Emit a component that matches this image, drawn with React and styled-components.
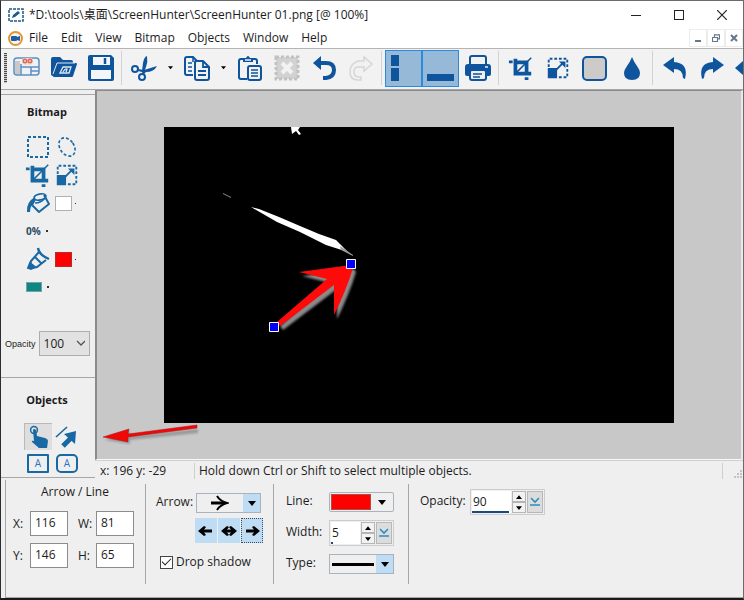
import React from "react"
import styled, { createGlobalStyle } from "styled-components"

const blue = "#0f559d"
const sideBlue = "#1868a4"
const face = "#efefef"
const lineGray = "#a6a6a6"
const activeBlue = "#bfdcf5"

const GlobalStyle = createGlobalStyle`
  * {
    box-sizing: border-box;
  }
  body {
    margin: 0;
    background: #16181c;
    color: #1c1c1c;
    font-family: "Open Sans", "Noto Sans CJK SC", sans-serif;
    font-size: 12px;
    line-height: 16px;
  }
  button, input, select {
    font: inherit;
    color: inherit;
    margin: 0;
    padding: 0;
  }
  svg {
    display: block;
    flex: none;
  }
`

const Window = styled.div`
  display: flex;
  flex-direction: column;
  height: 100vh;
  min-height: 560px;
  overflow: hidden;
  border: 1px solid #6b6b6b;
  border-left-color: #2a2d33;
  border-bottom: 2px solid #1b1b1d;
  background: ${face};
`

const TitleBar = styled.header`
  display: flex;
  align-items: center;
  height: 27px;
  flex: none;
  padding-left: 7px;
  background: white;
`

const TitleText = styled.h1`
  flex: 1;
  margin: 0;
  padding-left: 5px;
  font-size: 12px;
  font-weight: 400;
  white-space: nowrap;
`

const CaptionButton = styled.button`
  display: flex;
  align-items: center;
  justify-content: center;
  width: 43px;
  height: 26px;
  border: 0;
  background: none;
`

const MenuBar = styled.nav`
  display: flex;
  align-items: center;
  height: 20px;
  flex: none;
  padding-left: 7px;
  background: white;
`

const MenuItem = styled.button`
  padding: 0 7px 0 6px;
  border: 0;
  background: none;
`

const MenuList = styled.div`
  display: flex;
  flex: 1;
`

const ChildButton = styled.button`
  display: flex;
  align-items: center;
  justify-content: center;
  width: 18px;
  height: 18px;
  border: 1px solid #ececec;
  background: white;
`

const ToolBar = styled.div`
  display: flex;
  align-items: center;
  height: 42px;
  flex: none;
  overflow: hidden;
  padding-bottom: 2px;
  border-top: 1px solid #b4b4b4;
  border-bottom: 1px solid ${lineGray};
  background: #f2f2f2;
`

const Grip = styled.div`
  width: 3px;
  height: 30px;
  flex: none;
  margin: 0 1px 0 3px;
  background: repeating-linear-gradient(#4a4a4a 0 1px, #c8c8c8 1px 2px);
`

const ToolButton = styled.button`
  display: flex;
  align-items: center;
  justify-content: center;
  flex: none;
  width: 37px;
  height: 37px;
  border: 1px solid ${(props) => (props.$on ? "#2b8ade" : "transparent")};
  background: ${(props) => (props.$on ? "#97b9d8" : "none")};
`

const DropButton = styled.button`
  display: flex;
  align-items: center;
  justify-content: center;
  flex: none;
  width: 16px;
  height: 37px;
  border: 0;
  background: none;
`

const Separator = styled.div`
  flex: none;
  width: 1px;
  height: 34px;
  margin: 0 3px 0 2px;
  background: #d2d2d2;
`

const Work = styled.div`
  display: flex;
  flex: 1;
  min-height: 0;
`

const Side = styled.aside`
  display: flex;
  flex-direction: column;
  flex: none;
  width: 94px;
  margin-bottom: 2px;
  padding-top: 4px;
  border-bottom: 1px solid ${lineGray};
`

const SideSection = styled.section`
  padding-top: ${(props) => props.$top}px;
  border-top: 1px solid ${lineGray};
  flex: ${(props) => (props.$grow ? 1 : "none")};
`

const SideTitle = styled.h2`
  margin: 0 0 ${(props) => props.$gap}px;
  padding-right: 2px;
  font-size: 11px;
  line-height: 16px;
  font-weight: 700;
  text-align: center;
`

const ToolGrid = styled.div`
  display: grid;
  grid-template-columns: 28px 28px;
  grid-auto-rows: ${(props) => props.$row || 28}px;
  column-gap: 1px;
  padding-left: 23px;
`

const SideButton = styled.button`
  display: flex;
  align-items: center;
  justify-content: center;
  border: 0;
  color: #2c4a66;
  background: ${(props) => (props.$pressed ? "#dedede" : "none")};
  box-shadow: ${(props) => (props.$pressed ? "inset 1px 1px #b9b9b9" : "none")};
`

const WideButton = styled.button`
  grid-column: 1 / 3;
  display: flex;
  align-items: center;
  gap: 5px;
  padding-left: 2px;
  border: 0;
  background: none;
  color: #2c4a66;
  font-size: 10px;
  font-weight: 700;
`

const Swatch = styled.span`
  width: ${(props) => props.$w || 17}px;
  height: ${(props) => props.$h || 15}px;
  border: 1px solid ${(props) => props.$edge || "#b0b0b0"};
  background: ${(props) => props.$fill};
`

const Dot = styled.span`
  width: ${(props) => props.$size}px;
  height: ${(props) => props.$size}px;
  background: #333;
`

const SwatchButton = styled(SideButton)`
  justify-content: flex-start;
  gap: 3px;
  padding-left: 2px;
`

const OpacityRow = styled.div`
  display: flex;
  align-items: center;
  gap: 3px;
  margin-top: 30px;
  padding-left: 4px;
`

const SmallLabel = styled.label`
  font-family: "Liberation Sans", sans-serif;
  font-size: 9px;
  line-height: 12px;
`

const SelectWrap = styled.span`
  display: grid;
  align-items: center;
  width: 51px;
  height: 25px;
  border: 1px solid #adadad;
  background: #e2e2e2;

  select,
  svg {
    grid-area: 1 / 1;
  }
  svg {
    justify-self: end;
    margin-right: 4px;
    pointer-events: none;
  }
`

const PlainSelect = styled.select`
  appearance: none;
  width: 100%;
  padding-left: 4px;
  border: 0;
  background: none;
`

const Stage = styled.div`
  display: flex;
  flex-direction: column;
  flex: 1;
  min-width: 0;
`

const CanvasArea = styled.main`
  position: relative;
  display: flex;
  align-items: center;
  justify-content: center;
  flex: 1;
  min-height: 0;
  border: solid #8b8b8b;
  border-width: 1px 2px 1px 2px;
  border-right-color: #e9e9e9;
  border-bottom-color: #f8f8f8;
  background: #c8c8c8;
`

const Picture = styled.div`
  width: 510px;
  height: 296px;
  flex: none;
  background: black;
`

const Pointer = styled.svg`
  position: absolute;
  left: 0;
  bottom: 14px;
`

const StatusBar = styled.footer`
  display: flex;
  align-items: center;
  height: 20px;
  flex: none;
  padding-left: 5px;
  border-top: 1px solid #d0d0d0;
  white-space: nowrap;
`

const StatusCell = styled.span`
  padding-right: 10px;
  width: ${(props) => (props.$grow ? "auto" : "95px")};
  flex: ${(props) => (props.$grow ? 1 : "none")};
  border-right: 1px solid #cfcfcf;
  padding-left: ${(props) => (props.$grow ? 4 : 0)}px;
`

const Properties = styled.div`
  display: flex;
  flex: none;
  height: 118px;
  margin-left: 4px;
  padding-top: 4px;
  border-left: 1px solid ${lineGray};
  border-bottom: 1px solid ${lineGray};
`

const Group = styled.section`
  display: flex;
  flex-direction: column;
  gap: ${(props) => props.$gap || 0}px;
  width: ${(props) => props.$width}px;
  height: 100px;
  padding: ${(props) => props.$pad};
  border-right: ${(props) => (props.$last ? 0 : 1)}px solid ${lineGray};
  white-space: nowrap;
`

const GroupTitle = styled.h2`
  margin: 0;
  padding-right: 8px;
  font-size: 12px;
  font-weight: 400;
  text-align: center;
`

const FieldGrid = styled.div`
  display: grid;
  grid-template-columns: 17px 38px 28px 38px;
  row-gap: 7px;
  align-items: center;
  margin-top: 11px;

  label:nth-of-type(even) {
    padding-left: 10px;
  }
`

const NumberBox = styled.input`
  width: 38px;
  height: 25px;
  padding: 0 0 3px 4px;
  border: 1px solid #8c8c8c;
  background: white;
`

const Field = styled.div`
  display: flex;
  align-items: center;
  height: ${(props) => props.$h || 20}px;

  > label,
  > span:first-child {
    width: ${(props) => props.$label}px;
    padding-bottom: 2px;
  }
`

const Combo = styled.button`
  display: flex;
  align-items: stretch;
  justify-content: space-between;
  width: 65px;
  height: 20px;
  border: 1px solid #a9b3bd;
  border-radius: ${(props) => (props.$round ? 2 : 0)}px;
  background: ${face};
`

const ComboFace = styled.span`
  display: flex;
  flex: 1;
  align-items: center;
  justify-content: center;
`

const ComboArrow = styled.span`
  display: flex;
  align-items: center;
  justify-content: center;
  width: ${(props) => (props.$lit ? 17 : 22)}px;
  background: ${(props) => (props.$lit ? activeBlue : "none")};
`

const ArrowStyles = styled.div`
  display: flex;
  gap: 1px;
  margin-left: 39px;
`

const StyleButton = styled.button`
  display: flex;
  align-items: center;
  justify-content: center;
  width: 22px;
  height: 25px;
  border: 1px ${(props) => (props.$on ? "dotted #33506b" : `solid ${activeBlue}`)};
  background: ${activeBlue};
`

const CheckLabel = styled.label`
  display: flex;
  align-items: center;
  gap: 3px;
  margin: 6px 0 0 4px;
`

const CheckBox = styled.input`
  appearance: none;
  display: grid;
  place-items: center;
  width: 13px;
  height: 13px;
  border: 1px solid #444;
  background: white;

  &:checked::after {
    content: "";
    width: 8px;
    height: 4px;
    margin-bottom: 3px;
    border: solid #222;
    border-width: 0 0 1px 1px;
    transform: rotate(-45deg);
  }
`

const SpinBox = styled.div`
  display: flex;
  gap: 1px;
  width: ${(props) => props.$width}px;
  height: 26px;
  padding: 1px;
  border: 1px solid #cdcdcd;
`

const SpinValue = styled.div`
  display: flex;
  flex-direction: column;
  justify-content: space-between;
  align-items: flex-start;
  flex: 1;
  min-width: 0;
  background: white;
`

const SpinInput = styled.input`
  width: 100%;
  height: 20px;
  padding-left: 1px;
  border: 0;
  background: none;
`

const SpinLevel = styled.div`
  height: 2px;
  background: #174a80;
`

const SpinButtons = styled.div`
  display: grid;
  grid-template-rows: 1fr 1fr;
  width: 14px;
`

const SpinButton = styled.button`
  display: flex;
  align-items: center;
  justify-content: center;
  border: 1px solid #b5b5b5;
  background: #f2f2f2;
`

const SliderButton = styled.button`
  display: flex;
  align-items: center;
  justify-content: center;
  width: 16px;
  border: 1px solid #b8b8b8;
  background: #dcdcdc;
`

const Triangle = ({ size = 8, up = false }) => (
  <svg width={size} height={size / 2 + 1} viewBox="0 0 8 5" aria-hidden="true">
    <path d={up ? "M0 5h8L4 0z" : "M0 0h8L4 5z"} fill="#000" />
  </svg>
)

const Icon = ({ size = 28, box = 28, color = blue, children }) => (
  <svg
    width={size}
    height={size}
    viewBox={`0 0 ${box} ${box}`}
    fill="none"
    stroke={color}
    strokeWidth="2"
    aria-hidden="true">
    {children}
  </svg>
)

const CaptureIcon = () => (
  <Icon>
    <rect x="1" y="4" width="25" height="17" rx="3" fill="#eef2f6" stroke="#5d8fc2" strokeWidth="1.5" />
    <path d="M2 7h5v13H2z" fill="#c8c8c8" stroke="none" />
    <path d="M8 10v11M8 13h18M18 13v8M18 17h8" stroke="#5d8fc2" strokeWidth="1.5" />
    <rect x="9" y="4" width="11" height="7" rx="3" fill="#f3dcd6" stroke="none" />
    <circle cx="12" cy="7" r="1.7" stroke="#dc6a58" strokeWidth="1.6" />
    <circle cx="17" cy="7" r="1.7" stroke="#dc6a58" strokeWidth="1.6" />
  </Icon>
)

const FolderIcon = () => (
  <Icon>
    <path d="M1 20V5q0-2 2-2h7l3 3h8q2 0 2 2v2H8L4 22q-3 0-3-2z" fill={blue} stroke="none" />
    <path d="M8 10h18l-4 12H4z" fill={blue} stroke={blue} strokeLinejoin="round" />
    <path d="M3 20l4-11h18" stroke="#dfe8f0" strokeWidth="1" />
    <path d="M10 19l3-6h8l-2 6zM13 18q2-4 4-3l-1 3" stroke="#dce8f4" strokeWidth="1.3" />
  </Icon>
)

const SaveIcon = () => (
  <Icon>
    <path d="M3 1h21l3 3v21q0 2-2 2H3q-2 0-2-2V3q0-2 2-2z" fill={blue} stroke="none" />
    <path d="M6 3h17v8H6zM4 16h20v9H4z" fill="#f4f6f8" stroke="none" />
    <path d="M18 4v6" strokeWidth="2.5" />
  </Icon>
)

const CutIcon = () => (
  <Icon>
    <circle cx="5" cy="15" r="3" />
    <circle cx="12" cy="23" r="3" />
    <path d="M8 15l6 1 13-4q-3 6-11 6l-3 3-1-3-4-1zM12 17L13 9q1-6 4-7 1 6-1 11l-2 5z" fill={blue} stroke="none" />
  </Icon>
)

const CopyIcon = () => (
  <Icon>
    <path d="M10 21H4q-2 0-2-2V5q0-2 2-2h6l4 4" />
    <path d="M10 3v5M5 9h4M5 13h4M5 17h4" strokeWidth="1.5" />
    <path d="M12 8q0-1 2-1h6l6 6v11q0 2-2 2H14q-2 0-2-2z" />
    <path d="M20 7v6h6M15 17h8M15 21h8" strokeWidth="1.8" />
  </Icon>
)

const PasteIcon = () => (
  <Icon>
    <path d="M11 25H5q-2 0-2-2V7q0-2 2-2h14q2 0 2 2v3" />
    <path d="M7 8V4h3q2-4 4 0h3v4z" fill={blue} stroke="none" />
    <path d="M9 6h6" stroke="#efefef" strokeWidth="1.5" />
    <rect x="12" y="12" width="13" height="14" rx="2" />
    <path d="M15 16h7M15 19h7M15 22h7" strokeWidth="1.5" />
  </Icon>
)

const DeselectIcon = () => (
  <Icon color="#c2c2c2">
    <rect x="3" y="3" width="22" height="22" fill="#d2d2d2" strokeDasharray="3 2" strokeWidth="3" />
    <path d="M9 9l10 10M19 9L9 19" stroke="#f2f2f2" strokeWidth="4" />
  </Icon>
)

const UndoIcon = () => (
  <Icon>
    <path d="M8 9h8q8 0 8 7t-8 8h-3" strokeWidth="4" />
    <path d="M3 9l8-7v14z" fill={blue} stroke="none" />
  </Icon>
)

const RedoOutlineIcon = () => (
  <Icon color="#d6d6d6">
    <path d="M17 7V3l8 7-8 7v-4h-6q-4 0-4 5t5 5h2v3h-3q-8 0-8-8t8-11z" strokeWidth="1.5" />
  </Icon>
)

const SidePaneIcon = () => (
  <Icon size={35} box={35}>
    <path d="M5 4h8v11H5zM5 17h8v13H5z" fill={blue} stroke="none" />
  </Icon>
)

const BottomPaneIcon = () => (
  <Icon size={35} box={35}>
    <path d="M4 23h27v7H4z" fill={blue} stroke="none" />
  </Icon>
)

const PrintIcon = () => (
  <Icon>
    <path d="M6 10V4q0-2 2-2h12q2 0 2 2v6" />
    <path d="M1 13q0-3 3-3h20q3 0 3 3v7q0 2-2 2H3q-2 0-2-2z" fill={blue} stroke="none" />
    <rect x="6" y="16" width="16" height="10" rx="2" fill="#efefef" />
    <path d="M9 20h9M9 23h7" strokeWidth="1.5" />
    <path d="M21 13h3" stroke="#efefef" strokeWidth="1.5" />
  </Icon>
)

const CropIcon = ({ size = 26, color = blue }) => (
  <Icon size={size} color={color}>
    <path d="M8 4v16h17M8 8h12v13" strokeWidth="4" />
    <path d="M1 6h4v3H1zM18 24h4v3h-4z" fill={color} stroke="none" />
    <path d="M9 19L25 3" strokeWidth="1.6" />
  </Icon>
)

const ResizeIcon = ({ size = 26, color = blue }) => (
  <Icon size={size} color={color}>
    <path d="M4 13V4h20v20h-9" strokeDasharray="3 2" />
    <path d="M3 14h10v11H3zM15 7h7v7z" fill={color} stroke="none" />
    <path d="M12 16l8-8" />
  </Icon>
)

const PanelIcon = () => (
  <Icon>
    <rect x="2" y="3" width="23" height="23" rx="4" fill="#cdcbc9" />
  </Icon>
)

const DropIcon = () => (
  <Icon>
    <path d="M14 3q2 5 5 9t3 7q0 7-8 7t-8-7q0-3 3-7t5-9z" fill={blue} stroke="none" />
  </Icon>
)

const BackIcon = ({ flip = false }) => (
  <Icon>
    <path
      transform={flip ? "matrix(-1 0 0 1 28 0)" : undefined}
      d="M2 11l11-8v5q15 1 11 17l-2-1q0-9-9-9v4z"
      fill={blue}
      stroke="none"
    />
  </Icon>
)

const MarqueeIcon = () => (
  <Icon size={22} box={22} color={sideBlue}>
    <rect x="1" y="1" width="20" height="20" strokeDasharray="3 2" />
  </Icon>
)

const LassoIcon = () => (
  <Icon size={22} box={22} color={sideBlue}>
    <ellipse cx="11" cy="11" rx="7" ry="10" transform="rotate(-35 11 11)" strokeDasharray="3 2" strokeWidth="1.6" />
  </Icon>
)

const BucketIcon = () => (
  <Icon size={24} box={24} color={sideBlue}>
    <path d="M9 8l-3 6 7 7 10-8-5-9" strokeWidth="2" strokeLinejoin="round" />
    <ellipse cx="14" cy="6" rx="6" ry="3" transform="rotate(-12 14 6)" strokeWidth="1.8" />
    <path d="M9 12q6 0 10-5" strokeWidth="1.5" />
    <path d="M9 6Q0 11 1 21h3q0-6 4-9z" fill={sideBlue} stroke="none" />
  </Icon>
)

const MarkerIcon = () => (
  <Icon size={24} box={24} color={sideBlue}>
    <path d="M12 1q1 7 11 11" strokeWidth="2.4" />
    <path d="M13 5L5 14l-1 5 2 2 5-1 9-7M9 10l6 6" strokeWidth="2" />
    <path d="M2 21l2-5 5 4-4 2z" fill={sideBlue} />
  </Icon>
)

const TouchIcon = () => (
  <Icon size={24} box={24} color={sideBlue}>
    <circle cx="8" cy="5" r="3.4" strokeWidth="1.5" />
    <path d="M7 5q1-2 3 0l1 6 8 2q3 1 3 3l-1 7h-8l-7-6q-1-2 2-1z" fill={sideBlue} stroke="none" />
  </Icon>
)

const LineArrowIcon = () => (
  <Icon size={24} box={24} color={sideBlue}>
    <path d="M1 12L12 2" strokeWidth="1.6" />
    <path d="M8 21l9-9" strokeWidth="5" />
    <path d="M9 9l12-3-1 13z" fill={sideBlue} stroke="none" />
  </Icon>
)

const TextBoxIcon = styled.span`
  width: 22px;
  height: 19px;
  border: 2px solid ${sideBlue};
  border-radius: ${(props) => props.$radius}px;
  color: #2a78c8;
  font-size: 10px;
  line-height: 14px;
  text-align: center;
`

const Shaft = ({ left, right }) => (
  <svg width="18" height="12" viewBox="0 0 18 12" aria-hidden="true">
    <path d="M3 6h12" stroke="#000" strokeWidth="3" />
    {left && <path d="M1 6l6-5 2 1-3 4 3 4-2 1z" />}
    {right && <path d="M17 6l-6-5-2 1 3 4-3 4 2 1z" />}
  </svg>
)

const DownLine = () => (
  <svg width="10" height="10" viewBox="0 0 10 10" fill="none" stroke="#2a8fc0" strokeWidth="1.6" aria-hidden="true">
    <path d="M1 1l4 4 4-4M0 8h10" />
  </svg>
)

const Spinner = ({ id, width, value, level }) => (
  <SpinBox $width={width}>
    <SpinValue>
      <SpinInput id={id} type="text" defaultValue={value} />
      <SpinLevel style={{ width: `${level}%` }} />
    </SpinValue>
    <SpinButtons>
      <SpinButton aria-label="Increase">
        <Triangle size={6} up />
      </SpinButton>
      <SpinButton aria-label="Decrease">
        <Triangle size={6} />
      </SpinButton>
    </SpinButtons>
    <SliderButton aria-label="Show slider">
      <DownLine />
    </SliderButton>
  </SpinBox>
)

const menus = ["File", "Edit", "View", "Bitmap", "Objects", "Window", "Help"]

const App = () => {
  return (
    <>
      <GlobalStyle />
      <Window>
        <TitleBar>
          <Icon size={16} box={16} color="#1b5a8c">
            <rect x="1" y="2" width="14" height="12" strokeWidth="1.5" strokeDasharray="3 1" />
            <path d="M4 11l1-3 5-4 2 2-5 4z" fill="#1b5a8c" stroke="none" />
          </Icon>
          <TitleText>*D:\tools\桌面\ScreenHunter\ScreenHunter 01.png [@ 100%]</TitleText>
          <CaptionButton aria-label="Minimize">
            <Icon size={10} box={10} color="#222">
              <path d="M0 5.5h10" strokeWidth="1" />
            </Icon>
          </CaptionButton>
          <CaptionButton aria-label="Maximize">
            <Icon size={10} box={10} color="#222">
              <rect x=".5" y=".5" width="9" height="9" strokeWidth="1" />
            </Icon>
          </CaptionButton>
          <CaptionButton aria-label="Close">
            <Icon size={10} box={10} color="#222">
              <path d="M0 0l10 10M10 0L0 10" strokeWidth="1.2" />
            </Icon>
          </CaptionButton>
        </TitleBar>

        <MenuBar>
          <Icon size={15} box={15} color="#e2962f">
            <circle cx="7.5" cy="7.5" r="6.5" fill="#f4f4f4" />
            <path d="M3 6q0-1 1-1h4q1 0 1 1l3-1v5l-3-1q0 1-1 1H4q-1 0-1-1z" fill="#1d5da3" stroke="none" />
          </Icon>
          <MenuList>
            {menus.map((menu) => (
              <MenuItem key={menu}>{menu}</MenuItem>
            ))}
          </MenuList>
          <ChildButton aria-label="Minimize document">
            <Icon size={8} box={8} color="#66788a">
              <path d="M1 7h6" />
            </Icon>
          </ChildButton>
          <ChildButton aria-label="Restore document">
            <Icon size={8} box={8} color="#66788a">
              <path d="M.5 3.5h5v4h-5zM2.5 3V.8h5v4H6" strokeWidth="1.2" />
            </Icon>
          </ChildButton>
          <ChildButton aria-label="Close document">
            <Icon size={8} box={8} color="#66788a">
              <path d="M1 1l6 6M7 1L1 7" />
            </Icon>
          </ChildButton>
        </MenuBar>

        <ToolBar>
          <Grip />
          <ToolButton aria-label="Capture"><CaptureIcon /></ToolButton>
          <ToolButton aria-label="Open"><FolderIcon /></ToolButton>
          <ToolButton aria-label="Save"><SaveIcon /></ToolButton>
          <Separator />
          <ToolButton aria-label="Cut"><CutIcon /></ToolButton>
          <DropButton aria-label="Cut options"><Triangle size={5} /></DropButton>
          <ToolButton aria-label="Copy"><CopyIcon /></ToolButton>
          <DropButton aria-label="Copy options"><Triangle size={5} /></DropButton>
          <ToolButton aria-label="Paste"><PasteIcon /></ToolButton>
          <ToolButton aria-label="Delete"><DeselectIcon /></ToolButton>
          <ToolButton aria-label="Undo"><UndoIcon /></ToolButton>
          <ToolButton aria-label="Redo"><RedoOutlineIcon /></ToolButton>
          <Separator />
          <ToolButton $on aria-label="Side panel"><SidePaneIcon /></ToolButton>
          <ToolButton $on aria-label="Bottom panel"><BottomPaneIcon /></ToolButton>
          <ToolButton aria-label="Print"><PrintIcon /></ToolButton>
          <Separator />
          <ToolButton aria-label="Crop"><CropIcon /></ToolButton>
          <ToolButton aria-label="Resize"><ResizeIcon /></ToolButton>
          <ToolButton aria-label="Border"><PanelIcon /></ToolButton>
          <ToolButton aria-label="Blur"><DropIcon /></ToolButton>
          <Separator />
          <ToolButton aria-label="Rotate left"><BackIcon /></ToolButton>
          <ToolButton aria-label="Rotate right"><BackIcon flip /></ToolButton>
          <ToolButton aria-label="Flip">
            <Icon>
              <path d="M0 14l8-7v5h14v4H8v5z" fill={blue} stroke="none" />
            </Icon>
          </ToolButton>
        </ToolBar>

        <Work>
          <Side>
            <SideSection $top={9} $grow>
              <SideTitle $gap={13}>Bitmap</SideTitle>
              <ToolGrid>
                <SideButton aria-label="Select rectangle"><MarqueeIcon /></SideButton>
                <SideButton aria-label="Select freehand"><LassoIcon /></SideButton>
                <SideButton aria-label="Crop"><CropIcon color={sideBlue} /></SideButton>
                <SideButton aria-label="Resize"><ResizeIcon color={sideBlue} /></SideButton>
                <SideButton aria-label="Fill"><BucketIcon /></SideButton>
                <SwatchButton aria-label="Fill colour">
                  <Swatch $fill="white" />
                  <Dot $size={1} />
                </SwatchButton>
                <WideButton>
                  0% <Dot $size={2} />
                </WideButton>
                <SideButton aria-label="Marker"><MarkerIcon /></SideButton>
                <SwatchButton aria-label="Marker colour">
                  <Swatch $fill="red" $edge="#b03030" />
                  <Dot $size={1} />
                </SwatchButton>
                <WideButton aria-label="Marker size">
                  <Swatch $fill="#0f8584" $edge="#6fa5a5" $w={16} $h={10} />
                  <Dot $size={2} />
                </WideButton>
              </ToolGrid>
              <OpacityRow>
                <SmallLabel htmlFor="bitmap-opacity">Opacity</SmallLabel>
                <SelectWrap>
                  <PlainSelect id="bitmap-opacity" defaultValue="100">
                    <option>100</option>
                    <option>50</option>
                  </PlainSelect>
                  <Icon size={9} box={9} color="#555">
                    <path d="M1 2l4 4 4-4" strokeWidth="1.3" />
                  </Icon>
                </SelectWrap>
              </OpacityRow>
            </SideSection>
            <SideSection $top={14}>
              <SideTitle $gap={15}>Objects</SideTitle>
              <ToolGrid $row={27}>
                <SideButton $pressed aria-label="Select object"><TouchIcon /></SideButton>
                <SideButton aria-label="Arrow or line"><LineArrowIcon /></SideButton>
                <SideButton><TextBoxIcon $radius={1}>A</TextBoxIcon></SideButton>
                <SideButton><TextBoxIcon $radius={5}>A</TextBoxIcon></SideButton>
              </ToolGrid>
            </SideSection>
          </Side>

          <Stage>
            <CanvasArea>
              <Picture>
                <svg width="510" height="296" viewBox="0 0 510 296" aria-hidden="true">
                  <defs>
                    <filter id="shade" x="-20%" y="-20%" width="140%" height="140%">
                      <feGaussianBlur stdDeviation="0.8" />
                    </filter>
                  </defs>
                  <path d="M59 66l8 4v1l-8-4z" fill="#888" />
                  <path d="M87 80l8 2 20 8 21 9 19 8 17 6 5 5 7 7-22-7-26-13-23-10z" fill="#fff" />
                  <path d="M176 119l13 9v1l-12-6z" fill="#999" />
                  <path
                    d="M187 138l-52 7 28 7-50 43 3 4 54-41v30q12-24 19-47z"
                    transform="translate(3 4)"
                    fill="#8a8a8a"
                    filter="url(#shade)"
                  />
                  <path d="M187 138l-52 7 28 7-50 43 3 4 54-41v30q12-24 19-47z" fill="#fe0a0a" />
                  <path d="M105.500 195.500h9v9h-9zM182.500 132.500h9v9h-9z" fill="#00f" stroke="#fff" />
                  <path d="M127 0h9l-2 3 3 4-2 1-3-4-4 3z" fill="#fff" />
                </svg>
              </Picture>
              <Pointer width="106" height="28" viewBox="0 0 106 28" aria-hidden="true">
                <path d="M8 23l25-9v5l68-7v4l-68 7v4z" fill="#999" filter="url(#shade)" />
                <path d="M6 20l26-8-1 5 69-9v3l-69 9v5z" fill="#f00808" stroke="#a01818" strokeWidth=".5" />
              </Pointer>
            </CanvasArea>
            <StatusBar>
              <StatusCell>x: 196 y: -29</StatusCell>
              <StatusCell $grow>Hold down Ctrl or Shift to select multiple objects.</StatusCell>
              <Icon size={20} box={20} color="none">
                <path d="M17 9h2v2h-2zM14 12h2v2h-2zM17 12h2v2h-2zM11 15h2v2h-2zM14 15h2v2h-2zM17 15h2v2h-2z" fill="#c2c2c2" />
              </Icon>
            </StatusBar>
          </Stage>
        </Work>

        <Properties>
          <Group $width={140} $pad="0 0 0 7px">
            <GroupTitle>Arrow / Line</GroupTitle>
            <FieldGrid>
              <label htmlFor="pos-x">X:</label>
              <NumberBox id="pos-x" defaultValue="116" />
              <label htmlFor="pos-w">W:</label>
              <NumberBox id="pos-w" defaultValue="81" />
              <label htmlFor="pos-y">Y:</label>
              <NumberBox id="pos-y" defaultValue="146" />
              <label htmlFor="pos-h">H:</label>
              <NumberBox id="pos-h" defaultValue="65" />
            </FieldGrid>
          </Group>

          <Group $width={128} $pad="9px 0 0 10px" $gap={5}>
            <Field $label={40}>
              <span>Arrow:</span>
              <Combo aria-label="Arrow head">
                <ComboFace>
                  <svg width="18" height="16" viewBox="0 0 18 16" fill="none" stroke="#000" strokeWidth="2" aria-hidden="true">
                    <path d="M0 8h14" strokeWidth="3" />
                    <path d="M6 1q3 5 10 7-7 2-10 7" />
                  </svg>
                </ComboFace>
                <ComboArrow $lit><Triangle /></ComboArrow>
              </Combo>
            </Field>
            <ArrowStyles>
              <StyleButton aria-label="Arrow at start"><Shaft left /></StyleButton>
              <StyleButton aria-label="Arrows at both ends"><Shaft left right /></StyleButton>
              <StyleButton $on aria-label="Arrow at end"><Shaft right /></StyleButton>
            </ArrowStyles>
            <CheckLabel>
              <CheckBox type="checkbox" defaultChecked />
              Drop shadow
            </CheckLabel>
          </Group>

          <Group $width={135} $pad="8px 0 0 12px" $gap={8}>
            <Field $label={43}>
              <span>Line:</span>
              <Combo $round aria-label="Line colour">
                <ComboFace>
                  <Swatch $fill="red" $edge="#b84848" $w={40} $h={16} />
                </ComboFace>
                <ComboArrow><Triangle /></ComboArrow>
              </Combo>
            </Field>
            <Field $label={43} $h={26}>
              <label htmlFor="line-width">Width:</label>
              <Spinner id="line-width" width={65} value="5" level={6} />
            </Field>
            <Field $label={43}>
              <span>Type:</span>
              <Combo aria-label="Line type">
                <ComboFace>
                  <svg width="42" height="3" viewBox="0 0 42 3" aria-hidden="true">
                    <path d="M0 0h42v3H0z" />
                  </svg>
                </ComboFace>
                <ComboArrow $lit><Triangle /></ComboArrow>
              </Combo>
            </Field>
          </Group>

          <Group $width={160} $pad="5px 0 0 11px" $last>
            <Field $label={50} $h={26}>
              <label htmlFor="object-opacity">Opacity:</label>
              <Spinner id="object-opacity" width={75} value="90" level={95} />
            </Field>
          </Group>
        </Properties>
      </Window>
    </>
  )
}

export default App
